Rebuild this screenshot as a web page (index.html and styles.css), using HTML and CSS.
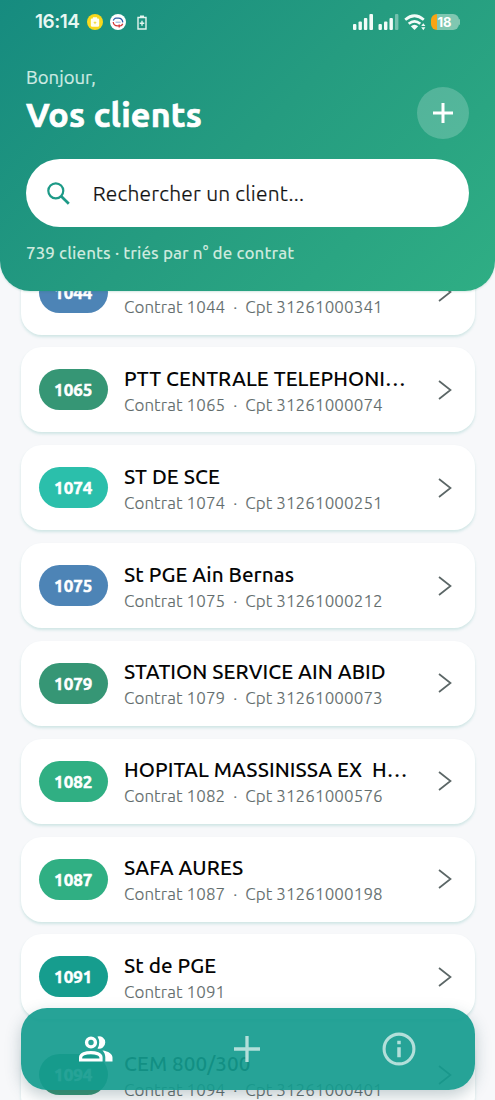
FILE: index.html
```html
<!DOCTYPE html>
<html lang="fr">
<head>
<meta charset="utf-8">
<title>Vos clients</title>
<link rel="stylesheet" href="styles.css">
</head>
<body>
<div class="app">
  <header class="header">
    <div class="status">
      <span class="clock">16:14</span>
      <svg class="app-icon" width="16" height="16" viewBox="0 0 16 16"><circle cx="8" cy="8" r="8" fill="#f8d81c"/><path d="M5.900 3.200h4.200v1.400h1q1.100 0 1.100 1.100v5.900q0 1.100-1.100 1.100H4.900q-1.100 0-1.100-1.100V5.700q0-1.100 1.100-1.100h1z" fill="#fffdf0"/><path d="M8 6.900l.5 1.300 1.300.5-1.300.5L8 10.500l-.5-1.300-1.300-.5 1.300-.5z" fill="#f0d420"/></svg>
      <svg class="sync-icon" width="16" height="16" viewBox="0 0 16 16"><circle cx="8" cy="8" r="8" fill="#fff"/><path d="M5.200 4.200h3.300q3.800 0 4.300 4.200M3.300 6.400q.5-1.300 1.900-2.200" fill="none" stroke="#2d5ba5" stroke-width="1.300"/><path d="M3.200 8q.5 3.800 4.300 3.900h3.200M12.700 9.700q-.5 1.500-2 2.200M9.200 10.400v3" fill="none" stroke="#d33a3a" stroke-width="1.300"/><path d="M5.600 8.200h5" stroke="#8fa8d6" stroke-width="1"/></svg>
      <svg class="saver-icon" width="10" height="15" viewBox="0 0 10 15"><path d="M1 2.500h8v11.500H1zM3 1.200h4M5 5.800v5M2.700 8.300h4.600" fill="none" stroke="#e4f5ef" stroke-width="1.400"/></svg>
      <span class="spacer"></span>
      <svg class="signals" width="46" height="16" viewBox="0 0 46 16" fill="#f2fbf8"><rect x="0" y="10" width="3.400" height="6" rx="1"/><rect x="5.500" y="7.500" width="3.400" height="8.500" rx="1"/><rect x="10.900" y="4" width="3.400" height="12" rx="1"/><rect x="16.400" y="0" width="3.600" height="16" rx="1"/><rect x="25.500" y="10" width="3.400" height="6" rx="1"/><rect x="31" y="7.500" width="3.400" height="8.500" rx="1"/><rect x="36.500" y="4" width="3.400" height="12" rx="1"/><rect x="42" y="0" width="3.400" height="16" rx="1" opacity=".38"/></svg>
      <svg class="wifi" width="22" height="17" viewBox="0 0 22 17"><path d="M1.200 5.800Q10.500-2.300 19.800 5.800M4.700 9.800q5.800-5 11.600 0" fill="none" stroke="#f2fbf8" stroke-width="2.700"/><path d="M6.800 12.200q3.700-3 7.400 0L10.500 16z" fill="#f2fbf8"/><path d="M17.200 12l2.100-2.700 2.100 2.700zM17.200 13.300l2.100 2.900 2.100-2.900z" fill="#f2fbf8"/></svg>
      <div class="battery"><span class="battery-text">18</span></div><span class="battery-cap"></span>
    </div>
    <div class="heading">
      <div>
        <p class="hello">Bonjour,</p>
        <h1 class="title">Vos clients</h1>
      </div>
      <button class="add" aria-label="Ajouter"><svg width="20" height="20" viewBox="0 0 20 20"><path d="M10 0v20M0 10h20" stroke="#fff" stroke-width="3"/></svg></button>
    </div>
    <div class="search">
      <svg class="search-icon" width="23" height="23" viewBox="0 0 23 23"><circle cx="8.800" cy="8.800" r="7.500" fill="none" stroke="#1d9a87" stroke-width="2.200"/><path d="M14.200 14.200l7.600 7.600" stroke="#1d9a87" stroke-width="2.700"/></svg>
      <span class="search-text">Rechercher un client...</span>
    </div>
    <p class="count">739 clients · triés par n° de contrat</p>
  </header>

  <main class="list">
    <article class="card"><span class="badge blue">1044</span><div class="info"><h2 class="name">CLIENT</h2><p class="sub">Contrat 1044 &nbsp;·&nbsp; Cpt 31261000341</p></div><svg class="chevron" viewBox="0 0 14 20"><path d="M1 1l11.500 9L1 19"/></svg></article>
    <article class="card"><span class="badge forest">1065</span><div class="info"><h2 class="name">PTT CENTRALE TELEPHONI…</h2><p class="sub">Contrat 1065 &nbsp;·&nbsp; Cpt 31261000074</p></div><svg class="chevron" viewBox="0 0 14 20"><path d="M1 1l11.500 9L1 19"/></svg></article>
    <article class="card"><span class="badge aqua">1074</span><div class="info"><h2 class="name">ST DE SCE</h2><p class="sub">Contrat 1074 &nbsp;·&nbsp; Cpt 31261000251</p></div><svg class="chevron" viewBox="0 0 14 20"><path d="M1 1l11.500 9L1 19"/></svg></article>
    <article class="card"><span class="badge blue">1075</span><div class="info"><h2 class="name">St PGE Ain Bernas</h2><p class="sub">Contrat 1075 &nbsp;·&nbsp; Cpt 31261000212</p></div><svg class="chevron" viewBox="0 0 14 20"><path d="M1 1l11.500 9L1 19"/></svg></article>
    <article class="card"><span class="badge forest">1079</span><div class="info"><h2 class="name">STATION SERVICE AIN ABID</h2><p class="sub">Contrat 1079 &nbsp;·&nbsp; Cpt 31261000073</p></div><svg class="chevron" viewBox="0 0 14 20"><path d="M1 1l11.500 9L1 19"/></svg></article>
    <article class="card"><span class="badge green">1082</span><div class="info"><h2 class="name">HOPITAL MASSINISSA EX &nbsp;H…</h2><p class="sub">Contrat 1082 &nbsp;·&nbsp; Cpt 31261000576</p></div><svg class="chevron" viewBox="0 0 14 20"><path d="M1 1l11.500 9L1 19"/></svg></article>
    <article class="card"><span class="badge green">1087</span><div class="info"><h2 class="name">SAFA AURES</h2><p class="sub">Contrat 1087 &nbsp;·&nbsp; Cpt 31261000198</p></div><svg class="chevron" viewBox="0 0 14 20"><path d="M1 1l11.500 9L1 19"/></svg></article>
    <article class="card"><span class="badge teal">1091</span><div class="info"><h2 class="name">St de PGE</h2><p class="sub">Contrat 1091</p></div><svg class="chevron" viewBox="0 0 14 20"><path d="M1 1l11.500 9L1 19"/></svg></article>
    <article class="card"><span class="badge forest">1094</span><div class="info"><h2 class="name">CEM 800/300</h2><p class="sub">Contrat 1094 &nbsp;·&nbsp; Cpt 31261000401</p></div><svg class="chevron" viewBox="0 0 14 20"><path d="M1 1l11.500 9L1 19"/></svg></article>
  </main>

  <nav class="tabs">
    <span class="tab"><svg width="34" height="26" viewBox="0 0 34 26"><circle cx="12" cy="6.500" r="4.400" fill="none" stroke="#fff" stroke-width="3.400"/><path d="M1.600 24v-2.600c0-6.400 20.400-6.400 20.400 0V24z" fill="none" stroke="#fff" stroke-width="3.200"/><path d="M18.500.5A6.200 6.200 0 1 1 18.500 12.500Q22 6.500 18.500.5z" fill="#fff"/><path d="M23.500 14.500c6 .7 10 3.500 10 7v4H26.300v-4.200c0-2.600-1-5-2.800-6.800z" fill="#fff"/></svg></span>
    <span class="tab"><svg width="26" height="26" viewBox="0 0 26 26"><path d="M13 0v26M0 13h26" stroke="#b3dfda" stroke-width="3.300"/></svg></span>
    <span class="tab"><svg width="34" height="34" viewBox="0 0 34 34"><circle cx="17" cy="17" r="14.900" fill="none" stroke="#b3dfda" stroke-width="3.100"/><path d="M17 8.800v3.400M17 15.200v10" stroke="#b3dfda" stroke-width="3.500"/></svg></span>
  </nav>
</div>
</body>
</html>
```

FILE: styles.css
```css
* { box-sizing: border-box; margin: 0; padding: 0; }
body { background: #f7f8fa; font-family: "Ubuntu", "Noto Sans", sans-serif; }
.app { position: relative; width: 495px; height: 1100px; overflow: hidden; }

.header {
  position: relative; z-index: 2; height: 290.500px; padding: 0 26px;
  border-radius: 0 0 30px 30px;
  background: linear-gradient(135deg, #168b7f 0%, #259c80 50%, #2fae84 100%);
  box-shadow: 0 1px 2px rgba(20, 120, 100, .18);
}
.status { display: flex; align-items: center; height: 44px; padding: 0 9px; }
.clock { width: 45px; font: 600 19px/24px "Inter", sans-serif; letter-spacing: -.5px; color: #e8f7f2; }
.app-icon { margin-left: 7px; }
.sync-icon { margin-left: 7px; }
.saver-icon { margin-left: 11px; }
.spacer { flex: 1; }
.wifi { margin-left: 5px; }
.battery {
  width: 28px; height: 16px; margin-left: 5px; border-radius: 6px;
  background: linear-gradient(90deg, #f9a414 6px, #80c7b1 6px);
  text-align: center;
}
.battery-text { display: block; font: 700 13px/16px "Inter", sans-serif; color: #fff; }
.battery-cap { width: 1.500px; height: 6px; border-radius: 0 2px 2px 0; background: #80c7b1; }

.heading { display: flex; justify-content: space-between; height: 115px; padding-top: 20px; }
.hello { font-size: 18.500px; line-height: 26px; -webkit-text-stroke: .2px #cfebe3; color: #cfebe3; }
.title {
  margin-top: 4px; font-size: 34px; line-height: 40px; font-weight: 700; letter-spacing: .25px;
  -webkit-text-stroke: .7px #fff; color: #fff; white-space: nowrap;
}
.add {
  display: grid; place-items: center; width: 52px; height: 52px; margin-top: 23px;
  border: 0; border-radius: 50%; background: rgba(255, 255, 255, .2);
}
.search { display: flex; align-items: center; height: 68px; padding-left: 21px; border-radius: 34px; background: #fff; }
.search-text { margin: -1px 0 0 22.700px; font-size: 21px; font-weight: 300; letter-spacing: .24px; -webkit-text-stroke: .2px #101010; color: #101010; }
.count { margin-top: 13px; font-size: 17px; line-height: 26px; font-weight: 500; letter-spacing: .08px; color: #cdeade; white-space: nowrap; }

.list { display: flex; flex-direction: column; gap: 12.850px; margin-top: -41px; padding: 0 20.500px; }
.card {
  display: flex; flex-shrink: 0; align-items: center; height: 85px; padding: 0 23px 0 18px;
  border-radius: 21px; background: #fff; box-shadow: 0 2px 3px rgba(20, 140, 130, .17);
}
.badge {
  width: 69.500px; height: 41px; border-radius: 21px; text-align: center;
  font-size: 17px; line-height: 41px; font-weight: 700;
  -webkit-text-stroke: .5px #fff; color: #fff;
}
.blue { background: #4d84b6; }
.forest { background: #369675; }
.aqua { background: #2bbfab; }
.green { background: #30af83; }
.teal { background: #169d8e; }
.info { flex: 1; min-width: 0; margin: 2px 0 0 16px; white-space: nowrap; }
.name { font-size: 20.700px; line-height: 28px; font-weight: 500; letter-spacing: .05px; color: #050505; }
.sub { font-size: 17px; line-height: 24px; font-weight: 300; letter-spacing: .1px; -webkit-text-stroke: .15px #626c6c; color: #626c6c; }
.chevron { width: 14px; height: 20px; fill: none; stroke: #5b6666; stroke-width: 1.700; }

.tabs {
  position: absolute; z-index: 3; left: 20.500px; top: 1007.500px;
  display: flex; align-items: center; width: 454px; height: 82px; border-radius: 26px;
  background: rgba(20, 155, 142, .92);
  box-shadow: 0 6px 16px rgba(40, 80, 90, .28);
}
.tab { display: flex; flex: 1; justify-content: center; }
```
